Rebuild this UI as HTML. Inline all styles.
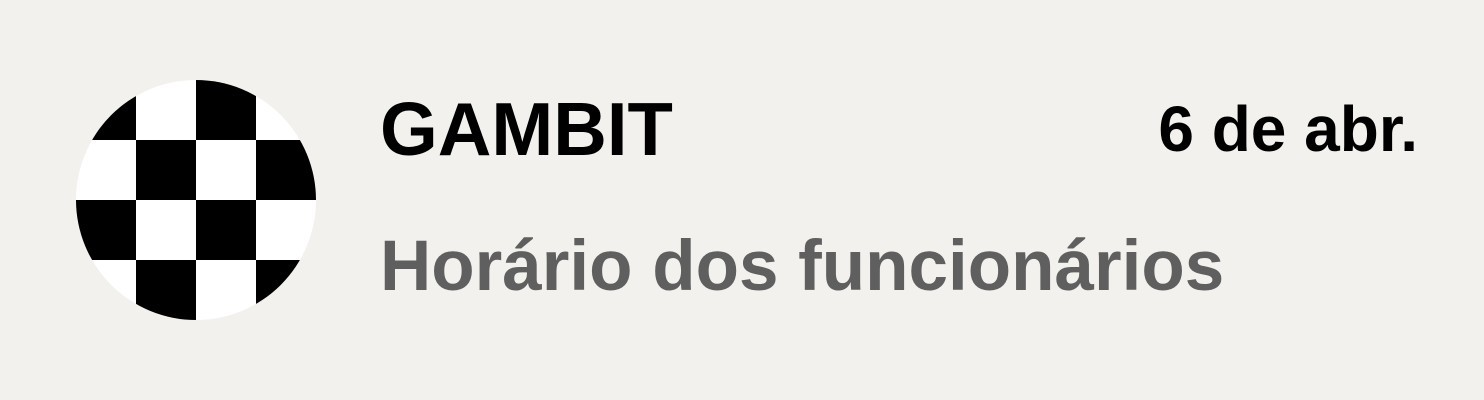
<!DOCTYPE html>
<html><head><meta charset="utf-8"><style>
html,body{margin:0;padding:0;background:#f2f1ed;width:1484px;height:400px;overflow:hidden;font-family:"Liberation Sans",sans-serif;font-weight:bold}
.t{position:absolute;white-space:nowrap;line-height:1}
</style></head><body>
<svg style="position:absolute;left:0;top:0" width="400" height="400">
<defs><clipPath id="c"><circle cx="196" cy="200" r="120"/></clipPath></defs>
<g clip-path="url(#c)">
<rect x="76" y="80" width="240" height="240" fill="#fff"/>
<rect x="76" y="80" width="60" height="60"/><rect x="196" y="80" width="60" height="60"/>
<rect x="136" y="140" width="60" height="60"/><rect x="256" y="140" width="60" height="60"/>
<rect x="76" y="200" width="60" height="60"/><rect x="196" y="200" width="60" height="60"/>
<rect x="136" y="260" width="60" height="60"/><rect x="256" y="260" width="60" height="60"/>
</g></svg>
<div class="t" style="left:380px;top:92px;font-size:75px;color:#000;transform:scaleX(0.99);transform-origin:left">GAMBIT</div>
<div class="t" style="right:66px;top:97px;font-size:64px;color:#000">6 de abr.</div>
<div class="t" style="left:380px;top:231px;font-size:71px;color:#5f5f5f">Horário dos funcionários</div>
</body></html>
